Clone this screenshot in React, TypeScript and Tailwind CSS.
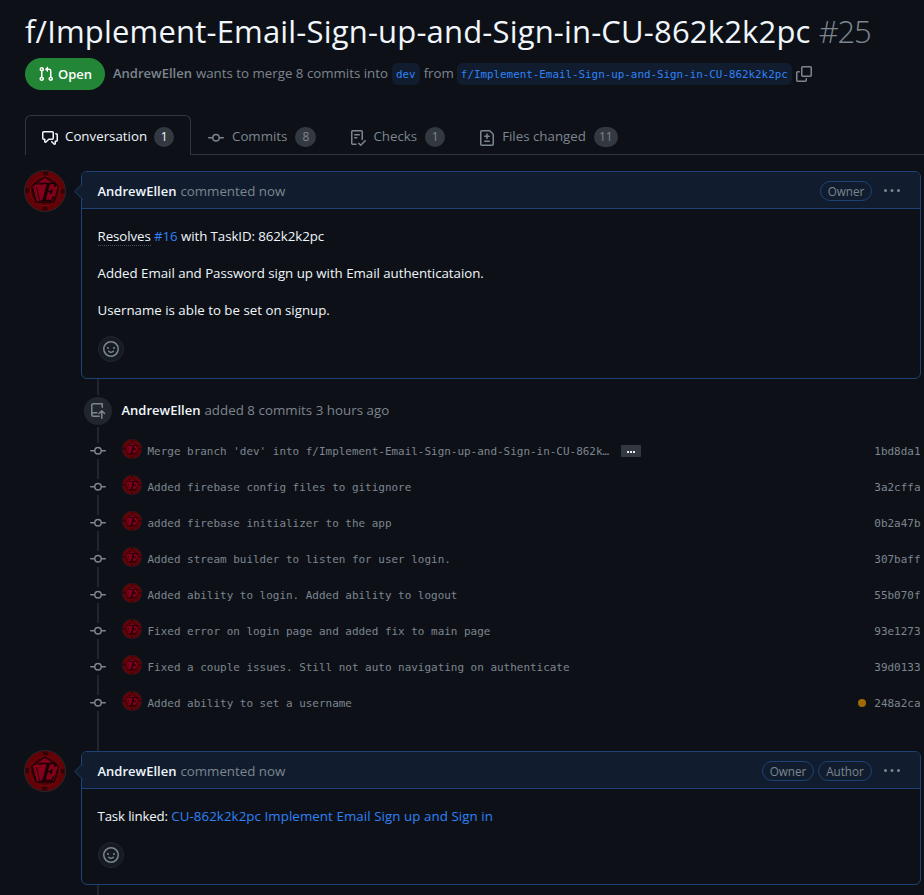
import type { ReactNode } from "react";

const ICONS = {
  pullRequest:
    "M1.5 3.25a2.25 2.25 0 1 1 3 2.122v5.256a2.251 2.251 0 1 1-1.5 0V5.372A2.25 2.25 0 0 1 1.5 3.25Zm5.677-.177L9.573.677A.25.25 0 0 1 10 .854V2.5h1A2.5 2.5 0 0 1 13.5 5v5.628a2.251 2.251 0 1 1-1.5 0V5a1 1 0 0 0-1-1h-1v1.646a.25.25 0 0 1-.427.177L7.177 3.427a.25.25 0 0 1 0-.354ZM3.75 2.5a.75.75 0 1 0 0 1.5.75.75 0 0 0 0-1.5Zm0 9.5a.75.75 0 1 0 0 1.5.75.75 0 0 0 0-1.5Zm8.25.75a.75.75 0 1 0 1.5 0 .75.75 0 0 0-1.5 0Z",
  discussion:
    "M1.75 1h8.5c.966 0 1.75.784 1.75 1.75v5.5A1.75 1.75 0 0 1 10.25 10H7.061l-2.574 2.573A1.458 1.458 0 0 1 2 11.543V10h-.25A1.75 1.75 0 0 1 0 8.25v-5.5C0 1.784.784 1 1.75 1ZM1.5 2.75v5.5c0 .138.112.25.25.25h1a.75.75 0 0 1 .75.75v2.19l2.72-2.72a.749.749 0 0 1 .53-.22h3.5a.25.25 0 0 0 .25-.25v-5.5a.25.25 0 0 0-.25-.25h-8.5a.25.25 0 0 0-.25.25Zm13 2a.25.25 0 0 0-.25-.25h-.5a.75.75 0 0 1 0-1.5h.5c.966 0 1.75.784 1.75 1.75v5.5A1.75 1.75 0 0 1 14.25 12H14v1.543a1.458 1.458 0 0 1-2.487 1.03L9.22 12.28a.749.749 0 0 1 .326-1.275.749.749 0 0 1 .734.215l2.22 2.22v-2.19a.75.75 0 0 1 .75-.75h1a.25.25 0 0 0 .25-.25Z",
  commit:
    "M11.93 8.5a4.002 4.002 0 0 1-7.86 0H.75a.75.75 0 0 1 0-1.5h3.32a4.002 4.002 0 0 1 7.86 0h3.32a.75.75 0 0 1 0 1.5Zm-1.43-.75a2.5 2.5 0 1 0-5 0 2.5 2.5 0 0 0 5 0Z",
  checklist:
    "M2.5 1.75v11.5c0 .138.112.25.25.25h3.17a.75.75 0 0 1 0 1.5H2.75A1.75 1.75 0 0 1 1 13.25V1.75C1 .784 1.784 0 2.75 0h8.5C12.216 0 13 .784 13 1.75v7.736a.75.75 0 0 1-1.5 0V1.75a.25.25 0 0 0-.25-.25h-8.5a.25.25 0 0 0-.25.25Zm13.274 9.537v-.001l-4.557 4.45a.75.75 0 0 1-1.055-.008l-1.943-1.95a.75.75 0 0 1 1.062-1.058l1.419 1.425 4.026-3.932a.75.75 0 1 1 1.048 1.074ZM4.75 4h4.5a.75.75 0 0 1 0 1.5h-4.5a.75.75 0 0 1 0-1.5ZM4 7.75A.75.75 0 0 1 4.75 7h2a.75.75 0 0 1 0 1.5h-2A.75.75 0 0 1 4 7.75Z",
  fileDiff:
    "M1 1.75C1 .784 1.784 0 2.75 0h7.586c.464 0 .909.184 1.237.513l2.914 2.914c.329.328.513.773.513 1.237v9.586A1.75 1.75 0 0 1 13.25 16H2.75A1.75 1.75 0 0 1 1 14.25Zm1.75-.25a.25.25 0 0 0-.25.25v12.5c0 .138.112.25.25.25h10.5a.25.25 0 0 0 .25-.25V4.664a.25.25 0 0 0-.073-.177l-2.914-2.914a.25.25 0 0 0-.177-.073ZM8 3.25a.75.75 0 0 1 .75.75v1.5h1.5a.75.75 0 0 1 0 1.5h-1.5v1.5a.75.75 0 0 1-1.5 0V7h-1.5a.75.75 0 0 1 0-1.5h1.5V4A.75.75 0 0 1 8 3.25Zm-3 8a.75.75 0 0 1 .75-.75h4.5a.75.75 0 0 1 0 1.5h-4.5a.75.75 0 0 1-.75-.75Z",
  copy: "M0 6.75C0 5.784.784 5 1.75 5h1.5a.75.75 0 0 1 0 1.5h-1.5a.25.25 0 0 0-.25.25v7.5c0 .138.112.25.25.25h7.5a.25.25 0 0 0 .25-.25v-1.5a.75.75 0 0 1 1.5 0v1.5A1.75 1.75 0 0 1 9.25 16h-7.5A1.75 1.75 0 0 1 0 14.25ZM5 1.75C5 .784 5.784 0 6.75 0h7.5C15.216 0 16 .784 16 1.75v7.5A1.75 1.75 0 0 1 14.25 11h-7.5A1.75 1.75 0 0 1 5 9.25Zm1.75-.25a.25.25 0 0 0-.25.25v7.5c0 .138.112.25.25.25h7.5a.25.25 0 0 0 .25-.25v-7.5a.25.25 0 0 0-.25-.25Z",
  kebab:
    "M8 9a1.5 1.5 0 1 0 0-3 1.5 1.5 0 0 0 0 3ZM1.5 9a1.5 1.5 0 1 0 0-3 1.5 1.5 0 0 0 0 3Zm13 0a1.5 1.5 0 1 0 0-3 1.5 1.5 0 0 0 0 3Z",
  smiley:
    "M8 0a8 8 0 1 1 0 16A8 8 0 0 1 8 0ZM1.5 8a6.5 6.5 0 1 0 13 0 6.5 6.5 0 0 0-13 0Zm3.82 1.636a.75.75 0 0 1 1.038.175l.007.009c.103.118.22.222.35.31.264.178.683.37 1.285.37.602 0 1.02-.192 1.285-.371.13-.088.247-.192.35-.31l.007-.008a.75.75 0 0 1 1.222.87c-.2.28-.45.5-.735.69-.63.418-1.37.638-2.127.629-.946 0-1.652-.308-2.126-.63a3.331 3.331 0 0 1-.735-.69.75.75 0 0 1 .184-1.044ZM12 7a1 1 0 1 1-2 0 1 1 0 0 1 2 0ZM5 8a1 1 0 1 1 0-2 1 1 0 0 1 0 2Z",
};

function Icon({ name, className = "" }: { name: keyof typeof ICONS; className?: string }) {
  return (
    <svg viewBox="0 0 16 16" fill="currentColor" className={`size-4 shrink-0 ${className}`}>
      <path d={ICONS[name]} />
    </svg>
  );
}

function RepoPushIcon() {
  return (
    <svg viewBox="0 0 16 16" fill="currentColor" className="size-4 shrink-0">
      <path d="M1 2.5A2.5 2.5 0 0 1 3.5 0h8.75a.75.75 0 0 1 .75.75v3.5a.75.75 0 0 1-1.5 0V1.5h-8a1 1 0 0 0-1 1v6.708A2.493 2.493 0 0 1 3.5 9h3.25a.75.75 0 0 1 0 1.5H3.5a1 1 0 0 0 0 2h5.75a.75.75 0 0 1 0 1.5H3.5A2.5 2.5 0 0 1 1 11.5Z" />
      <path
        d="M11.75 15.25V8M9 10.5l2.75-2.75L14.5 10.5"
        fill="none"
        stroke="currentColor"
        strokeWidth="1.5"
        strokeLinecap="round"
        strokeLinejoin="round"
      />
    </svg>
  );
}

function Avatar({ className }: { className: string }) {
  return (
    <svg viewBox="0 0 42 42" className={`shrink-0 ${className}`}>
      <circle cx="21" cy="21" r="20.5" fill="#620206" stroke="#24282e" />
      <circle cx="21" cy="21" r="17.6" fill="none" stroke="#310306" strokeWidth="4" strokeDasharray="5 22.65" strokeDashoffset="2.5" />
      <circle cx="21" cy="21" r="14.8" fill="#4c0308" stroke="#7d0610" strokeWidth="1" />
      <path d="M21 7l13.500 9.500-4.500 15.500h-18l-4.500-15.500Z" fill="#84001a" stroke="#1c0206" strokeWidth="1.3" />
      <path d="M8.500 17l4 15M16 32l-3.500-15M12 14h7" fill="none" stroke="#1c0206" strokeWidth="0.9" />
      <path d="M15 13.500h16.500l-1 3.500M17 30.500h10.500l2.500-4M21.500 21.500h7M28 19l-1.300 5" fill="none" stroke="#160104" strokeWidth="1.600" />
      <path d="M24.500 13.500l-4.500 17" fill="none" stroke="#160104" strokeWidth="3" />
    </svg>
  );
}

function Counter({ children, className }: { children: ReactNode; className: string }) {
  return (
    <span className={`flex h-5 items-center justify-center rounded-full bg-[#343941] pt-px text-[12px] leading-5 ${className}`}>
      {children}
    </span>
  );
}

function Tab({ icon, label, count, className, countClass }: {
  icon: keyof typeof ICONS;
  label: string;
  count: number;
  className: string;
  countClass: string;
}) {
  return (
    <div className={`flex h-10 shrink-0 items-center ${className}`}>
      <Icon name={icon} className="mt-0.5 mr-[7px]" />
      <span className="whitespace-nowrap">{label}</span>
      <Counter className={countClass}>{count}</Counter>
    </div>
  );
}

function Label({ children, className }: { children: ReactNode; className: string }) {
  return (
    <span className={`flex h-5 items-center justify-center rounded-full border border-[#1e4275] pt-0.5 text-[11.700px] font-medium text-[#7d8590] ${className}`}>
      {children}
    </span>
  );
}

function Comment({ labels, children }: { labels: ReactNode; children: ReactNode }) {
  return (
    <div className="flex items-start">
      <Avatar className="-mt-px mr-[15px] size-[42px]" />
      <section className="relative w-[840px] shrink-0 rounded-md border border-[#1e4275]">
        <svg viewBox="0 0 9 17" className="absolute top-[11px] -left-2 h-[17px] w-[9px]">
          <path d="M9 .5L1 8.500 9 16.500Z" fill="#111d2e" />
          <path d="M8.500 .8L.8 8.500l7.700 7.700" fill="none" stroke="#1e4275" />
        </svg>
        <header className="flex h-[37px] items-center rounded-t-[5px] border-b border-[#1e4275] bg-[#111d2e] pt-0.5 pr-5 pl-[15.500px]">
          <span className="mt-0.5 text-[13px] font-semibold text-[#f0f6fc]">AndrewEllen</span>
          <span className="mt-0.5 ml-1 text-[13.300px]">commented now</span>
          <div className="ml-auto flex gap-1">{labels}</div>
          <Icon name="kebab" className="ml-3 text-[#7d8590]" />
        </header>
        <div className="flex flex-col items-start gap-4 p-4 pl-[15.500px] text-[13.300px] leading-[21px] text-[#f0f6fc]">
          {children}
          <button className="ml-[0.500px] flex size-[26px] items-center justify-center rounded-full border border-[#21262d] bg-[#161b22] text-[#7d8590]">
            <Icon name="smiley" />
          </button>
        </div>
      </section>
    </div>
  );
}

const COMMITS = [
  { message: "Merge branch 'dev' into f/Implement-Email-Sign-up-and-Sign-in-CU-862k…", sha: "1bd8da1", more: true },
  { message: "Added firebase config files to gitignore", sha: "3a2cffa" },
  { message: "added firebase initializer to the app", sha: "0b2a47b" },
  { message: "Added stream builder to listen for user login.", sha: "307baff" },
  { message: "Added ability to login. Added ability to logout", sha: "55b070f" },
  { message: "Fixed error on login page and added fix to main page", sha: "93e1273" },
  { message: "Fixed a couple issues. Still not auto navigating on authenticate", sha: "39d0133" },
  { message: "Added ability to set a username", sha: "248a2ca", pending: true },
];

function Rail({ className }: { className: string }) {
  return <div className={`w-0.5 bg-[#21262d] ${className}`} />;
}

function Branch({ children, className }: { children: string; className: string }) {
  return (
    <code className={`h-[22px] rounded-md bg-[#111d2e] px-1 pt-px font-['DejaVu_Sans_Mono',monospace] text-[10.860px] leading-[21px] text-[#2f81f7] ${className}`}>
      {children}
    </code>
  );
}

export default function App() {
  return (
    <main className="h-[895px] w-[924px] overflow-hidden bg-[#0d1117] font-['Open_Sans','Noto_Sans',sans-serif] text-[13.300px] text-[#7d8590]">
      <h1 className="flex h-[58px] items-center pt-1 pl-[25px] whitespace-nowrap">
        <span className="text-[31px] tracking-[0.180px] text-[#f0f6fc]">f/Implement-Email-Sign-up-and-Sign-in-CU-862k2k2pc</span>
        <span className="ml-2 text-[31px] font-light tracking-[-1.200px]">#25</span>
      </h1>

      <div className="flex h-8 items-center pl-[25px] whitespace-nowrap">
        <span className="mr-2 flex h-8 w-20 items-center justify-center gap-1 rounded-full bg-[#238636] text-[13px] font-semibold text-white">
          <Icon name="pullRequest" />
          <span className="mt-px">Open</span>
        </span>
        <span className="text-[13px] font-semibold">AndrewEllen</span>
        <span className="ml-1">wants to merge 8 commits into</span>
        <Branch className="ml-1">dev</Branch>
        <span className="ml-1">from</span>
        <Branch className="ml-[3px]">f/Implement-Email-Sign-up-and-Sign-in-CU-862k2k2pc</Branch>
        <Icon name="copy" className="ml-1" />
      </div>

      <nav className="mt-[25px] flex h-10 pl-[25px]">
        <Tab
          icon="discussion" label="Conversation" count={1}
          className="w-[166px] rounded-t-md border border-b-0 border-[#30363d] pt-0.5 pl-4 text-[#f0f6fc]"
          countClass="ml-[7px] w-5 font-medium"
        />
        <div className="flex flex-1 border-b border-[#30363d]">
          <Tab icon="commit" label="Commits" count={8} className="gap-px pt-[3px] pl-[17px]" countClass="ml-[7px] w-[21px]" />
          <Tab icon="checklist" label="Checks" count={1} className="pt-[3px] pl-[34px]" countClass="ml-2 w-5" />
          <Tab icon="fileDiff" label="Files changed" count={11} className="pt-[3px] pl-[34px]" countClass="ml-2 w-6" />
        </div>
      </nav>

      <div className="mt-4 pl-6">
        <Comment labels={<Label className="w-[52px]">Owner</Label>}>
          <p className="mt-px -mb-px tracking-[-0.080px] whitespace-nowrap">
            <span className="border-b border-dotted border-[#484f58]">Resolves</span> <a className="text-[#2f81f7]">#16</a> with TaskID: 862k2k2pc
          </p>
          <p className="mt-px -mb-px tracking-[-0.030px]">Added Email and Password sign up with Email authenticataion.</p>
          <p className="mt-px -mb-px">Username is able to be set on signup.</p>
        </Comment>

        <div className="ml-[60px] flex">
          <div className="flex w-7 flex-col items-center">
            <Rail className="h-4" />
            <div className="my-0.5 flex size-7 items-center justify-center rounded-full bg-[#21262d]">
              <RepoPushIcon />
            </div>
            <Rail className="h-1.5" />
          </div>
          <div className="mt-[22px] ml-[9.500px] flex h-5 items-center whitespace-nowrap">
            <span className="text-[13px] font-semibold text-[#f0f6fc]">AndrewEllen</span>
            <span className="ml-1 tracking-[0.040px]">added 8 commits 3 hours ago</span>
          </div>
        </div>

        {COMMITS.map((c) => (
          <div key={c.sha} className="ml-[60px] flex h-9 w-[836.500px] items-center font-['DejaVu_Sans_Mono',monospace] text-[10.960px]">
            <div className="flex w-7 flex-col items-center">
              <Rail className="h-2.5" />
              <Icon name="commit" />
              <Rail className="h-2.5" />
            </div>
            <Avatar className="-mt-1 ml-2.5 size-5" />
            <span className="mt-0.5 ml-[5.500px] whitespace-pre">{c.message}</span>
            {c.more && (
              <span className="ml-3 flex h-3 w-5 items-center justify-center gap-px rounded-[1px] bg-[#343941]">
                <i className="mt-0.5 size-0.5 bg-[#e6edf3]" />
                <i className="mt-0.5 size-0.5 bg-[#e6edf3]" />
                <i className="mt-0.5 size-0.5 bg-[#e6edf3]" />
              </span>
            )}
            {c.pending && <span className="ml-auto size-2 rounded-full bg-[#9e6a03]" />}
            <span className={c.pending ? "mt-0.5 ml-[8.500px]" : "mt-0.5 ml-auto"}>{c.sha}</span>
          </div>
        ))}
        <Rail className="ml-[73px] h-[30px]" />

        <Comment
          labels={
            <>
              <Label className="w-[52px]">Owner</Label>
              <Label className="w-[54px]">Author</Label>
            </>
          }
        >
          <p className="mt-px -mb-px whitespace-nowrap">
            <span className="tracking-[-0.170px]">Task linked: </span>
            <a className="tracking-[0.080px] text-[#2f81f7]">CU-862k2k2pc Implement Email Sign up and Sign in</a>
          </p>
        </Comment>
        <Rail className="ml-[73px] h-2.5" />
      </div>
    </main>
  );
}
